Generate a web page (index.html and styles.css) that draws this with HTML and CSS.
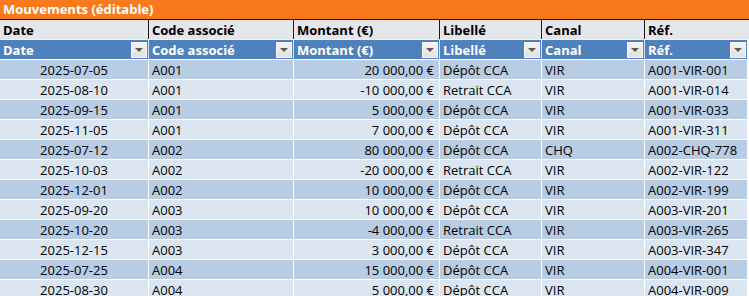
FILE: index.html
```html
<!DOCTYPE html>
<html lang="fr">
<head>
<meta charset="utf-8">
<title>Mouvements</title>
<link rel="stylesheet" href="styles.css">
</head>
<body>
<div class="sheet">
  <div class="title">Mouvements (éditable)</div>
  <div class="row head">
    <div class="cell">Date</div>
    <div class="cell">Code associé</div>
    <div class="cell">Montant (€)</div>
    <div class="cell">Libellé</div>
    <div class="cell">Canal</div>
    <div class="cell">Réf.</div>
  </div>
  <div class="row filter">
    <div class="cell"><span>Date</span><i class="dd"></i></div>
    <div class="cell"><span>Code associé</span><i class="dd"></i></div>
    <div class="cell"><span>Montant (€)</span><i class="dd"></i></div>
    <div class="cell"><span>Libellé</span><i class="dd"></i></div>
    <div class="cell"><span>Canal</span><i class="dd"></i></div>
    <div class="cell"><span>Réf.</span><i class="dd"></i></div>
  </div>
  <div class="row data dark"><div class="cell c">2025-07-05</div><div class="cell">A001</div><div class="cell r">20 000,00 €</div><div class="cell">Dépôt CCA</div><div class="cell">VIR</div><div class="cell">A001-VIR-001</div></div>
  <div class="row data light"><div class="cell c">2025-08-10</div><div class="cell">A001</div><div class="cell r">-10 000,00 €</div><div class="cell">Retrait CCA</div><div class="cell">VIR</div><div class="cell">A001-VIR-014</div></div>
  <div class="row data dark"><div class="cell c">2025-09-15</div><div class="cell">A001</div><div class="cell r">5 000,00 €</div><div class="cell">Dépôt CCA</div><div class="cell">VIR</div><div class="cell">A001-VIR-033</div></div>
  <div class="row data light"><div class="cell c">2025-11-05</div><div class="cell">A001</div><div class="cell r">7 000,00 €</div><div class="cell">Dépôt CCA</div><div class="cell">VIR</div><div class="cell">A001-VIR-311</div></div>
  <div class="row data dark"><div class="cell c">2025-07-12</div><div class="cell">A002</div><div class="cell r">80 000,00 €</div><div class="cell">Dépôt CCA</div><div class="cell">CHQ</div><div class="cell">A002-CHQ-778</div></div>
  <div class="row data light"><div class="cell c">2025-10-03</div><div class="cell">A002</div><div class="cell r">-20 000,00 €</div><div class="cell">Retrait CCA</div><div class="cell">VIR</div><div class="cell">A002-VIR-122</div></div>
  <div class="row data dark"><div class="cell c">2025-12-01</div><div class="cell">A002</div><div class="cell r">10 000,00 €</div><div class="cell">Dépôt CCA</div><div class="cell">VIR</div><div class="cell">A002-VIR-199</div></div>
  <div class="row data light"><div class="cell c">2025-09-20</div><div class="cell">A003</div><div class="cell r">10 000,00 €</div><div class="cell">Dépôt CCA</div><div class="cell">VIR</div><div class="cell">A003-VIR-201</div></div>
  <div class="row data dark"><div class="cell c">2025-10-20</div><div class="cell">A003</div><div class="cell r">-4 000,00 €</div><div class="cell">Retrait CCA</div><div class="cell">VIR</div><div class="cell">A003-VIR-265</div></div>
  <div class="row data light"><div class="cell c">2025-12-15</div><div class="cell">A003</div><div class="cell r">3 000,00 €</div><div class="cell">Dépôt CCA</div><div class="cell">VIR</div><div class="cell">A003-VIR-347</div></div>
  <div class="row data dark"><div class="cell c">2025-07-25</div><div class="cell">A004</div><div class="cell r">15 000,00 €</div><div class="cell">Dépôt CCA</div><div class="cell">VIR</div><div class="cell">A004-VIR-001</div></div>
  <div class="row data light"><div class="cell c">2025-08-30</div><div class="cell">A004</div><div class="cell r">5 000,00 €</div><div class="cell">Dépôt CCA</div><div class="cell">VIR</div><div class="cell">A004-VIR-009</div></div>
</div>
</body>
</html>
```

FILE: styles.css
```css
html, body {
  margin: 0;
  padding: 0;
  background: #ffffff;
}
body {
  font-family: "Open Sans", "Liberation Sans", sans-serif;
  font-size: 13px;
  color: #000;
  overflow: hidden;
}
.sheet {
  width: 749px;
}
.title {
  height: 19px;
  line-height: 19px;
  background: #f97a1c;
  color: #fff;
  font-weight: bold;
  padding-left: 3px;
  border-bottom: 1px solid #1a1a1a;
}
.row {
  display: grid;
  grid-template-columns: 148px 144px 145px 101px 102px 102px;
  column-gap: 1px;
  width: 747px;
  height: 19px;
  border-bottom: 1px solid #fff;
}
.cell {
  height: 19px;
  line-height: 20px;
  padding: 0 3px;
  white-space: nowrap;
  overflow: hidden;
  display: flex;
  align-items: center;
}
.cell.c { justify-content: center; }
.cell.r { justify-content: flex-end; padding-right: 5px; }

.head {
  background: #1a1a1a;
  border-bottom-color: #f2f2f2;
  width: 749px;
  grid-template-columns: 148px 144px 145px 101px 102px 104px;
}
.head .cell {
  background: #e5e6ea;
  font-weight: bold;
}
.filter {
  background: #dfe6f0;
}
.filter .cell {
  background: #4f81bd;
  color: #fff;
  font-weight: bold;
  padding-right: 1px;
}
.filter .cell span {
  flex: 1;
}
.dd {
  width: 16px;
  height: 16px;
  box-sizing: border-box;
  border: 1px solid #f7f7f7;
  background: linear-gradient(#f3f3f3, #e1e1e1);
  display: flex;
  align-items: center;
  justify-content: center;
}
.dd::after {
  content: "";
  width: 0;
  height: 0;
  border-left: 4px solid transparent;
  border-right: 4px solid transparent;
  border-top: 4px solid #5a5a5a;
}
.data { background: #fff; }
.dark .cell { background: #b8cce4; }
.light .cell { background: #dce6f1; }
```
